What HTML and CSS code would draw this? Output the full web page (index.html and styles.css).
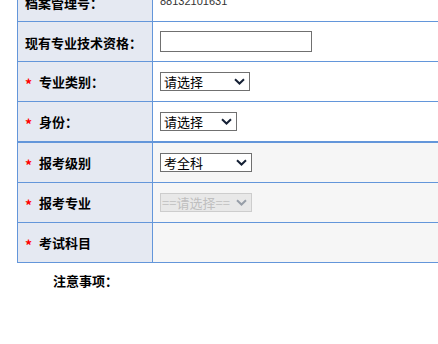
FILE: index.html
```html
<!DOCTYPE html>
<html lang="zh-CN">
<head>
    <meta charset="UTF-8">
    <title>报名信息</title>
    <link rel="stylesheet" href="styles.css">
</head>
<body>
    <div class="page">
        <table class="form-table">
            <tr>
                <td class="label">档案管理号：</td>
                <td class="value archive-cell"><span class="archive-no">88132101631</span></td>
            </tr>
            <tr>
                <td class="label">现有专业技术资格：</td>
                <td class="value"><input type="text" class="text-input"></td>
            </tr>
            <tr>
                <td class="label"><span class="req">*</span>专业类别：</td>
                <td class="value">
                    <select class="sel sel-type"><option>请选择</option></select>
                </td>
            </tr>
            <tr>
                <td class="label"><span class="req">*</span>身份：</td>
                <td class="value">
                    <select class="sel sel-id"><option>请选择</option></select>
                </td>
            </tr>
        </table>

        <table class="form-table exam-table">
            <tr>
                <td class="label"><span class="req">*</span>报考级别</td>
                <td class="value">
                    <select class="sel sel-level"><option>考全科</option></select>
                </td>
            </tr>
            <tr>
                <td class="label"><span class="req">*</span>报考专业</td>
                <td class="value">
                    <select class="sel sel-major" disabled><option>==请选择==</option></select>
                </td>
            </tr>
            <tr>
                <td class="label"><span class="req">*</span>考试科目</td>
                <td class="value"></td>
            </tr>
        </table>

        <div class="notes">注意事项：</div>
    </div>
</body>
</html>
```

FILE: styles.css
```css
body {
    margin: 0;
    background: #fff;
    font-family: "Noto Sans CJK SC", "Liberation Sans", sans-serif;
    font-size: 12px;
    color: #000;
    overflow: hidden;
}

.page {
    width: 640px;
    margin-top: -19px;
    padding-left: 17px;
}

/* Form tables */
.form-table {
    width: 600px;
    border-collapse: collapse;
    table-layout: fixed;
}

.form-table td {
    height: 40px;
    padding: 0 7px;
    border: 1px solid #6396da;
    box-sizing: border-box;
}

.label {
    width: 135px;
    background: #e5e9f2;
    font-size: 13px;
    font-weight: bold;
    white-space: nowrap;
    padding-top: 2px !important;
}

.value {
    background: #fff;
}

.exam-table .value {
    background: #f6f6f6;
}

.req {
    display: inline-block;
    width: 14px;
    color: #f00;
    font-size: 14px;
    vertical-align: -3px;
}

.archive-cell {
    padding-bottom: 4px !important;
}

.archive-no {
    font-family: "Liberation Sans", sans-serif;
    font-size: 11px;
    color: #333;
}

/* Inputs */
.text-input {
    width: 152px;
    height: 21px;
    box-sizing: border-box;
    border: 1px solid #707070;
    margin: 0;
    padding: 0 3px;
    display: block;
}

.sel {
    display: block;
    height: 19px;
    box-sizing: border-box;
    margin: 0;
    padding: 0 0 0 3px;
    border: 1px solid #707070;
    border-radius: 0;
    background: #fff url("data:image/svg+xml,%3Csvg xmlns='http://www.w3.org/2000/svg' width='11' height='7' viewBox='0 0 11 7'%3E%3Cpath d='M1 1.2 L5.5 5.5 L10 1.2' fill='none' stroke='%23152035' stroke-width='2'/%3E%3C/svg%3E") no-repeat right 4px center;
    -webkit-appearance: none;
    appearance: none;
    font-family: "Noto Sans CJK SC", sans-serif;
    font-size: 13px;
    line-height: 17px;
    color: #000;
}

.sel-type { width: 90px; }
.sel-id { width: 77px; }
.sel-level { width: 92px; }

.sel-major {
    width: 92px;
    padding-left: 1px;
    background-color: #e3e3e3;
    border-color: #bcbcbc;
    color: #a8a8a8;
    background-image: url("data:image/svg+xml,%3Csvg xmlns='http://www.w3.org/2000/svg' width='11' height='7' viewBox='0 0 11 7'%3E%3Cpath d='M1 1.2 L5.5 5.5 L10 1.2' fill='none' stroke='%23707a88' stroke-width='2'/%3E%3C/svg%3E");
}

.notes {
    margin: 8px 0 0 36px;
    font-size: 13px;
    font-weight: bold;
    line-height: 20px;
}
```
